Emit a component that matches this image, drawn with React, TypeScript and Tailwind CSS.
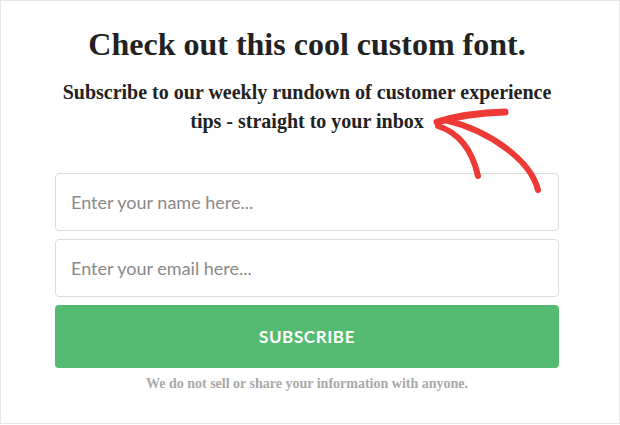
const serif = "font-['Liberation_Serif','Times_New_Roman',serif]";

const Field = ({ placeholder }: { placeholder: string }) => (
  <input
    type="text"
    placeholder={placeholder}
    className="w-full h-[58px] rounded-[4px] border border-[#dcdcdc] bg-white px-[15px] text-[18px] font-['Lato',sans-serif] text-[#555] placeholder:text-[#8a8a8a] outline-none"
  />
);

const Arrow = () => (
  <svg
    className="absolute inset-0 pointer-events-none"
    width="620"
    height="425"
    viewBox="0 0 620 425"
    fill="none"
  >
    <path d="M436 121 Q466 112 504 111" stroke="#ee3a36" strokeWidth="7" strokeLinecap="round" />
    <path d="M437 125 Q468 135 477 175" stroke="#ee3a36" strokeWidth="6" strokeLinecap="round" />
    <path d="M444 119 C490 130 530 160 537 189" stroke="#ee3a36" strokeWidth="6" strokeLinecap="round" />
  </svg>
);

export default function App() {
  return (
    <div className="relative w-[620px] h-[424px] border border-[#e6e6e6] bg-white overflow-hidden">
      <div className="flex flex-col items-center pt-[23px] pr-[6px]">
        <h1 className={`${serif} text-[32px] leading-[40px] font-bold text-[#222]`}>
          Check out this cool custom font.
        </h1>
        <p className={`${serif} mt-[14px] w-[504px] text-center text-[20px] leading-[29px] font-bold text-[#222]`}>
          Subscribe to our weekly rundown of customer experience tips - straight to your inbox
        </p>
        <form className="mt-[37px] w-[504px] flex flex-col gap-2">
          <Field placeholder="Enter your name here..." />
          <Field placeholder="Enter your email here..." />
          <button
            type="button"
            className="h-[63px] w-full rounded-[4px] bg-[#55bb73] text-white font-['Lato',sans-serif] font-bold text-[17px] tracking-[0.6px]"
          >
            SUBSCRIBE
          </button>
        </form>
        <p className={`${serif} mt-[6px] text-[14px] leading-[20px] font-bold text-[#a9a9a9]`}>
          We do not sell or share your information with anyone.
        </p>
      </div>
      <Arrow />
    </div>
  );
}
